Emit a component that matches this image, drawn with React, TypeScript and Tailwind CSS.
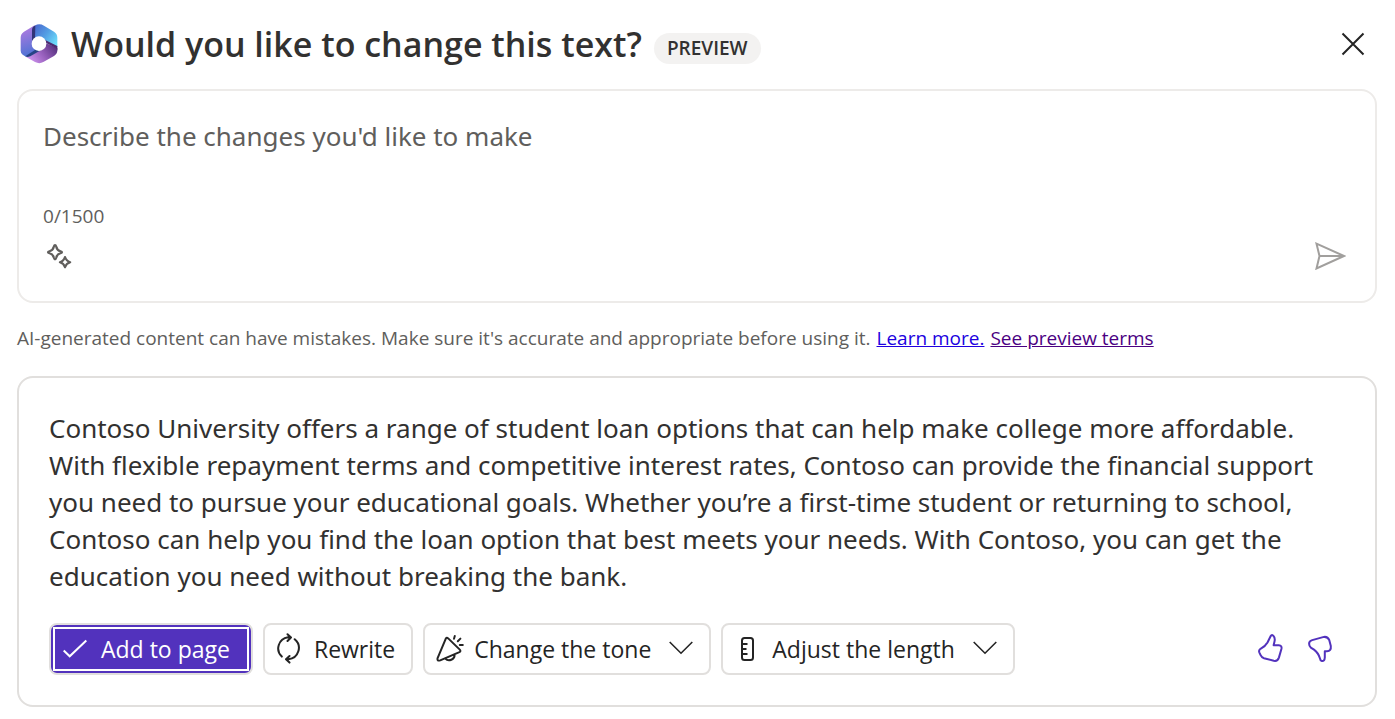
import { useState } from "react";
import type { ReactNode } from "react";

const MAX_LENGTH = 1500;

function CopilotLogo() {
  return (
    <svg className="h-10 w-[38px] shrink-0" viewBox="0 0 114 120" aria-hidden="true">
      <defs>
        <linearGradient id="left" x1="0.3" y1="0" x2="0.5" y2="1">
          <stop offset="0" stopColor="#b47be0" />
          <stop offset="1" stopColor="#4a72d4" />
        </linearGradient>
        <linearGradient id="right" x1="0" y1="0.1" x2="1" y2="0.8">
          <stop offset="0" stopColor="#4a6bd0" />
          <stop offset="0.5" stopColor="#539fe4" />
          <stop offset="1" stopColor="#6fe0fb" />
        </linearGradient>
        <linearGradient id="bottom" x1="0" y1="0.8" x2="1" y2="0.3">
          <stop offset="0" stopColor="#d69cf5" />
          <stop offset="0.5" stopColor="#9a62bf" />
          <stop offset="1" stopColor="#57317f" />
        </linearGradient>
      </defs>
      <path fill="url(#left)" d="M44 4 L12 23 Q2 29 2 41 V80 Q2 88 8 92 L18 98 L60 82 L50 60 L36 50 V20 Z" />
      <path fill="url(#right)" d="M44 5 Q58 -3 72 5 L102 23 Q112 29 112 41 V70 L78 52 L45 46 Z" />
      <path fill="#303477" d="M36 18 Q36 9 46 4 L45 44 L36 56 Z" />
      <path fill="url(#bottom)" d="M70 54 L112 72 V79 Q112 90 102 96 L70 114 Q58 121 45 114 L17 98 Q24 100 30 96 L62 76 Z" />
      <path fill="#4d2a70" d="M74 47 L112 66 V80 Q111 74 106 71 L74 55 Z" />
      <path fill="#274386" d="M16 97 L46 77 L62 79 L31 97 Q23 101 16 97 Z" />
      <circle cx="57" cy="59" r="22" fill="#fff" />
    </svg>
  );
}

function CloseIcon() {
  return (
    <svg className="h-6 w-6" viewBox="0 0 24 24" fill="none" stroke="currentColor" strokeWidth="2" aria-hidden="true">
      <path d="M1.5 1.5 22.5 22.5M22.5 1.5 1.5 22.5" />
    </svg>
  );
}

function SparkleIcon() {
  return (
    <svg className="h-7 w-7" viewBox="0 0 28 28" fill="none" stroke="currentColor" strokeWidth="2.2" strokeLinejoin="round" aria-hidden="true">
      <path d="M10 3 Q10.8 3 11.2 4.5 Q12 8.4 15.5 9.3 Q17 9.7 17 10.2 Q17 10.8 15.5 11.2 Q12 12 11.2 15.8 Q10.8 17.3 10 17.3 Q9.3 17.3 8.9 15.8 Q8 12 4.5 11.2 Q3 10.8 3 10.2 Q3 9.7 4.5 9.3 Q8 8.4 8.9 4.5 Q9.3 3 10 3Z" />
      <path d="M20 15 Q21.2 19.1 25.2 20.2 Q21.2 21.3 20 25.3 Q18.9 21.3 14.9 20.2 Q18.9 19.1 20 15Z" />
    </svg>
  );
}

function SendIcon() {
  return (
    <svg className="h-7 w-8" viewBox="0 0 32 28" fill="none" stroke="currentColor" strokeWidth="2" aria-hidden="true">
      <path d="M2.5 1.7 30 14 2.5 26.5 5.5 14ZM5.5 14H29" />
    </svg>
  );
}

function CheckIcon() {
  return (
    <svg className="h-6 w-6" viewBox="0 0 24 24" fill="none" stroke="currentColor" strokeWidth="2" aria-hidden="true">
      <path d="M.7 13.5 6.7 19.3 23.3 3.5" />
    </svg>
  );
}

function RewriteIcon() {
  return (
    <svg className="h-8 w-7" viewBox="3 1 28 32" fill="none" stroke="currentColor" strokeWidth="2" strokeLinecap="round" strokeLinejoin="round" aria-hidden="true">
      <path d="M8.8 24.6A11.3 11.3 0 0 1 15 5.2L18 5.5M14.5 2.2 18 5.5 14.5 9M21.7 7.2A11.3 11.3 0 0 1 15.5 27.2L13.5 27.2M16.5 24 13 27.3 16.5 30.6" />
    </svg>
  );
}

function MegaphoneIcon() {
  return (
    <svg className="h-8 w-7" viewBox="0 0 28 32" fill="none" stroke="currentColor" strokeWidth="2" strokeLinecap="round" strokeLinejoin="round" aria-hidden="true">
      <path d="M9.7 5.8Q10.6 4 12.2 5.4L23.8 16.6Q25.2 18.2 23.4 19.2L4.2 27.4Q1 28.3 1.5 25.4ZM9.2 25.6A5.5 5.5 0 0 0 18.6 21.5M18 5.7 18.8 3M21.8 8.2 24.4 5.6M23.8 12H26.8" />
    </svg>
  );
}

function RulerIcon() {
  return (
    <svg className="h-8 w-7" viewBox="1 0 28 32" fill="none" stroke="currentColor" strokeWidth="2" aria-hidden="true">
      <rect x="9" y="5" width="11" height="22" rx="2.5" />
      <path d="M9 11H14.5M9 16H13.5M9 21H14.5" />
    </svg>
  );
}

function ChevronIcon() {
  return (
    <svg className="h-6 w-6" viewBox="0 0 24 24" fill="none" stroke="currentColor" strokeWidth="1.6" aria-hidden="true">
      <path d="M.7 5 12 16.2 23.3 5" />
    </svg>
  );
}

function ThumbUpIcon() {
  return (
    <svg className="h-8 w-7" viewBox="0 1 28 32" fill="none" stroke="currentColor" strokeWidth="2" strokeLinejoin="round" aria-hidden="true">
      <path d="M14.6 4.3Q15.4 2.3 17.3 3.7Q19.5 5.8 18.4 10L17.6 13.2H22.8Q26.2 13.4 25.4 17L22.9 25.6Q21.6 29.6 17.8 28.8L8 26.2Q5.6 25.5 4.6 23.2L3.3 20.3Q2.5 18.2 4.5 16.8Q9.5 14.2 11.5 10.5Z" />
    </svg>
  );
}

function ThumbDownIcon() {
  return (
    <svg className="h-8 w-7" viewBox="0 1 28 32" fill="none" stroke="currentColor" strokeWidth="2" strokeLinejoin="round" aria-hidden="true">
      <path d="M6.2 8.1 17 5.1Q21.5 4 23.3 8.2L24.8 14Q25.4 19 21 19.2H18.8V25.4Q18.6 29.4 15.8 29Q14.3 28.7 14 26.5Q12.5 21 8 17.6L4.8 15.6Q3.1 14 3.1 11.8Q3 9 6.2 8.1Z" />
    </svg>
  );
}

function ActionButton({ icon, label, menu = false }: { icon: ReactNode; label: string; menu?: boolean }) {
  return (
    <button
      type="button"
      aria-haspopup={menu ? "menu" : undefined}
      className="flex h-[52px] items-center rounded-lg border-2 border-[#e1dfdd] bg-white pr-4 pl-[11px] text-[#242424]"
    >
      {icon}
      <span className="ml-[10px] whitespace-nowrap">{label}</span>
      {menu && <span className="ml-[18px]"><ChevronIcon /></span>}
    </button>
  );
}

export default function App() {
  const [prompt, setPrompt] = useState("");

  return (
    <main className="bg-white pt-5 pr-[18px] pb-3 pl-[17px] font-['Open_Sans','Noto_Sans',sans-serif] text-[#323130]">
      <header className="flex h-12 items-center pr-3 pl-[3px]">
        <CopilotLogo />
        <h1 className="ml-[13px] text-[34px] leading-[48px] font-semibold whitespace-nowrap">Would you like to change this text?</h1>
        <span className="mt-2 ml-3 flex h-[31px] items-center rounded-full bg-[#f3f2f1] px-[13px] pt-px text-[19px] font-semibold">PREVIEW</span>
        <button type="button" aria-label="Close" className="ml-auto text-[#242424]">
          <CloseIcon />
        </button>
      </header>

      <form
        className="mt-[21px] rounded-2xl border-2 border-[#edebe9] px-6 pt-6 pb-[31px] text-[#605e5c]"
        onSubmit={(event) => event.preventDefault()}
      >
        <textarea
          aria-label="Describe the changes you'd like to make"
          placeholder="Describe the changes you'd like to make"
          maxLength={MAX_LENGTH}
          value={prompt}
          onChange={(event) => setPrompt(event.target.value)}
          className="block h-[87px] w-full resize-none font-['Noto_Sans',sans-serif] text-[26px] leading-[43px] outline-none placeholder:text-[#605e5c]"
        />
        <p className="text-[19px] leading-7">{prompt.length}/{MAX_LENGTH}</p>
        <div className="mt-3 flex items-center justify-between pr-[5px]">
          <button type="button" aria-label="Suggestions" className="ml-0.5">
            <SparkleIcon />
          </button>
          <button type="submit" aria-label="Send" className="text-[#a19f9d]">
            <SendIcon />
          </button>
        </div>
      </form>

      <p className="mt-[19px] text-[19px] leading-8 text-[#605e5c]">
        AI-generated content can have mistakes. Make sure it's accurate and appropriate before using it.
        <a href="#learn-more" className="ml-[6px] text-[#2000e0] underline">Learn more.</a>
        <a href="#preview-terms" className="ml-[6px] text-[#4b0082] underline">See preview terms</a>
      </p>

      <section className="mt-[22px] rounded-2xl border-2 border-[#e1dfdd] px-[30px] pt-8 pb-[30px]">
        <p className="pr-2 font-['Noto_Sans',sans-serif] text-[26px] leading-[37px]">
          Contoso University offers a range of student loan options that can help make college more affordable. With
          flexible repayment terms and competitive interest rates, Contoso can provide the financial support you need to
          pursue your educational goals. Whether you’re a first-time student or returning to school, Contoso can help you
          find the loan option that best meets your needs. With Contoso, you can get the education you need without
          breaking the bank.
        </p>
        <div className="mt-7 flex items-center gap-[10px] text-[23px]">
          <button
            type="button"
            className="h-[52px] rounded-lg border-2 border-[#e1dfdd] bg-[#5232bd] p-[2px] text-white"
          >
            <span className="flex h-full items-center gap-[14px] border-2 border-white pr-[17px] pl-2 whitespace-nowrap">
              <CheckIcon />
              Add to page
            </span>
          </button>
          <ActionButton icon={<RewriteIcon />} label="Rewrite" />
          <ActionButton icon={<MegaphoneIcon />} label="Change the tone" menu />
          <ActionButton icon={<RulerIcon />} label="Adjust the length" menu />
          <div className="ml-auto flex gap-[22px] pr-[11px] text-[#5232bd]">
            <button type="button" aria-label="Like">
              <ThumbUpIcon />
            </button>
            <button type="button" aria-label="Dislike">
              <ThumbDownIcon />
            </button>
          </div>
        </div>
      </section>
    </main>
  );
}
